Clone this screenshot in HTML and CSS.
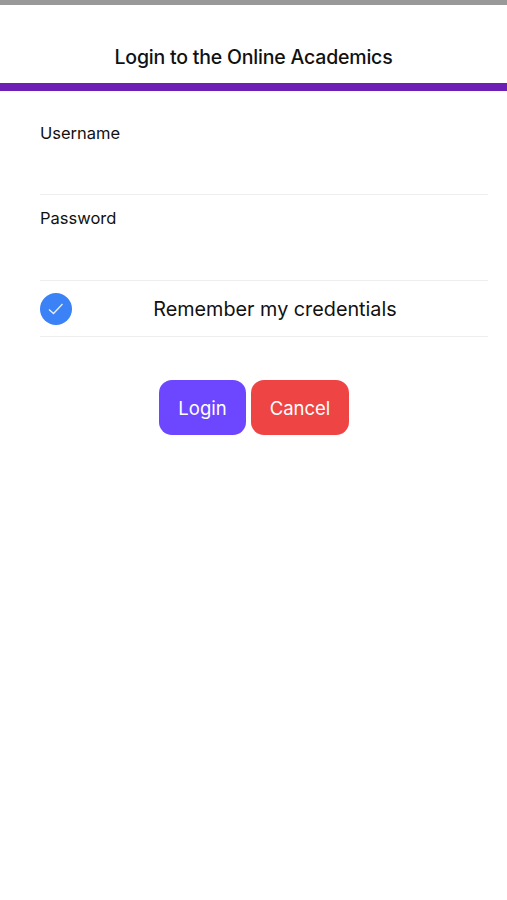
FILE: index.html
```html
<!DOCTYPE html>
<html lang="en">
<head>
  <meta charset="UTF-8" />
  <meta name="viewport" content="width=device-width, initial-scale=1" />
  <title>Login to the Online Academics</title>
  <link rel="stylesheet" href="styles.css">
</head>
<body>
  <div class="statusbar"></div>

  <div class="header">
    <div class="title">Login to the Online Academics</div>
  </div>

  <div class="form">
    <div class="field">
      <label for="username">Username</label>
      <input type="text" id="username" autocomplete="off" />
    </div>
    <div class="field">
      <label for="password">Password</label>
      <input type="password" id="password" autocomplete="off" />
    </div>

    <div class="remember">
      <span class="check">
        <svg width="18" height="14" viewBox="0 0 18 14" fill="none">
          <path d="M2 7.5 L6.5 11.5 L15.5 2" stroke="#e8f0ff" stroke-width="1.3" />
        </svg>
      </span>
      <span class="remember-text">Remember my credentials</span>
    </div>

    <div class="buttons">
      <button class="btn btn-login">Login</button>
      <button class="btn btn-cancel">Cancel</button>
    </div>
  </div>
</body>
</html>
```

FILE: styles.css
```css
body {
  background: white;
  color: #111;
  font-family: Inter, "Liberation Sans", sans-serif;
  margin: 0;
  padding: 0;
  height: 900px;
  overflow: hidden;
}
.statusbar {
  height: 5px;
  background: #999;
}
.header {
  height: 78px;
  display: flex;
  justify-content: center;
  align-items: center;
  padding-top: 26px;
  box-sizing: border-box;
}
.title {
  font-size: 19.5px;
  font-weight: 500;
  letter-spacing: -0.2px;
}
.form {
  border-top: 8px solid #6d1fb5;
  padding: 0 19px 0 40px;
}
.field {
  height: 86px;
  border-bottom: 1px solid #eee;
  box-sizing: border-box;
  padding-top: 13px;
}
.field:first-child {
  height: 104px;
  padding-top: 32px;
}
.field label {
  display: block;
  font-size: 16.5px;
  line-height: 20px;
}
.field input {
  display: block;
  width: 100%;
  height: 30px;
  border: none;
  outline: none;
  padding: 0;
  background: transparent;
  font-size: 16px;
}
.remember {
  height: 55px;
  border-bottom: 1px solid #eee;
  display: flex;
  align-items: center;
}
.check {
  width: 32px;
  height: 32px;
  border-radius: 50%;
  background: #3b82f6;
  display: flex;
  justify-content: center;
  align-items: center;
}
.remember-text {
  flex: 1;
  text-align: center;
  font-size: 19.8px;
  padding-right: 10px;
}
.buttons {
  display: flex;
  justify-content: center;
  gap: 5px;
  margin-top: 43px;
  padding-right: 20px;
}
.btn {
  height: 55px;
  border: none;
  border-radius: 13px;
  color: white;
  font-family: inherit;
  font-size: 18.5px;
  cursor: pointer;
}
.btn-login {
  width: 87px;
  background: #6c47ff;
}
.btn-cancel {
  width: 98px;
  background: #ef4444;
}
```
